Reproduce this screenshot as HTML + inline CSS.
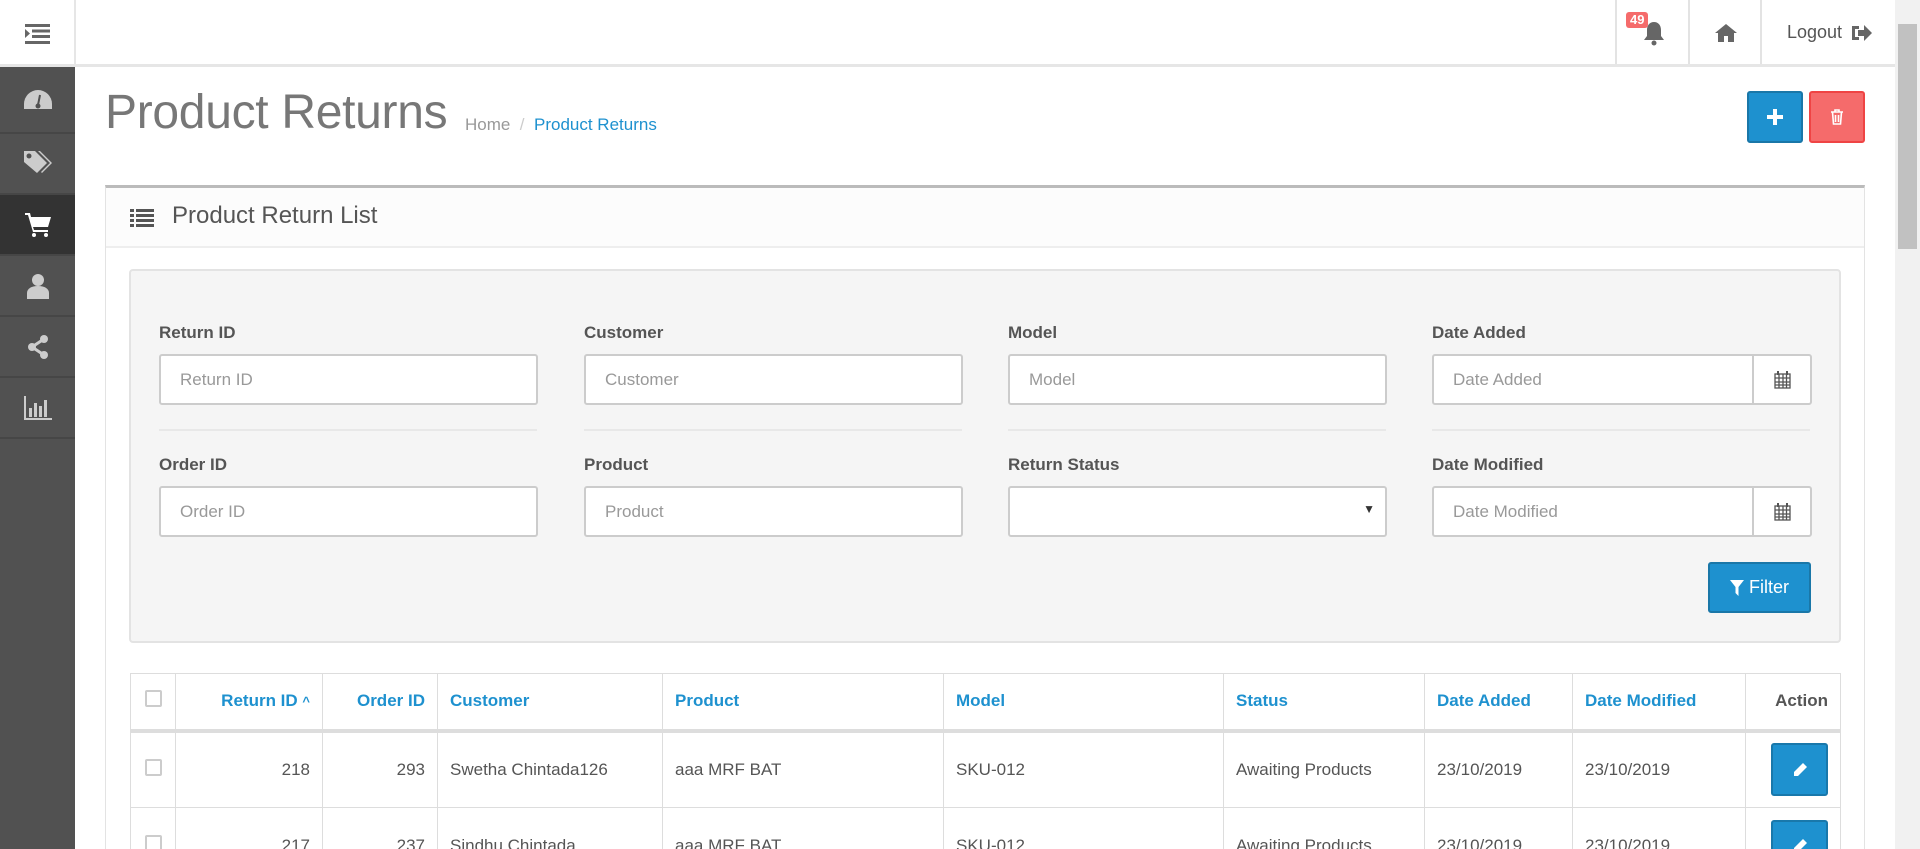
<!DOCTYPE html>
<html><head><meta charset="utf-8"><style>
*{box-sizing:border-box;margin:0;padding:0}
html,body{width:1920px;height:849px;overflow:hidden}
body{background:#fff;font-family:"Liberation Sans",sans-serif;color:#555;position:relative}
.hdr{position:absolute;left:0;top:0;width:1895px;height:67px;border-bottom:3px solid #e6e6e6;background:#fff}
.hdr .tog{position:absolute;left:0;top:0;width:76px;height:64px;border-right:2px solid #e6e6e6}
.hdr .cell{position:absolute;top:0;height:64px;border-left:2px solid #e3e3e3}
.side{position:absolute;left:0;top:67px;width:75px;height:782px;background:#515151}
.side div{height:61px;border-bottom:2px solid #464646;display:flex;align-items:center;justify-content:center}
.side div.act{background:#333}
.scroll{position:absolute;left:1895px;top:0;width:25px;height:849px;background:#f1f1f1}
.scroll .th{position:absolute;left:3px;top:24px;width:19px;height:225px;background:#c1c1c1}
h1{position:absolute;left:105px;top:85px;font-size:48px;font-weight:normal;color:#777;letter-spacing:-0.3px}
.bc{position:absolute;left:465px;top:115px;font-size:17px;color:#999}
.bc a{color:#1e91cf;text-decoration:none}
.btn{position:absolute;border-radius:3px;display:flex;align-items:center;justify-content:center}
.panel{position:absolute;left:105px;top:185px;width:1760px;height:700px;border:1px solid #e3e3e3;border-top:3px solid #bbb}
.ph{height:60px;background:#fcfcfc;border-bottom:2px solid #eee;position:relative}
.ph span{position:absolute;left:66px;top:14px;font-size:24px;color:#555}
.well{position:absolute;left:129px;top:269px;width:1712px;height:374px;background:#f5f5f5;border:2px solid #e3e3e3;border-radius:4px}
.lbl{position:absolute;font-size:17px;font-weight:bold;color:#555}
.inp{position:absolute;height:51px;background:#fff;border:2px solid #ccc;border-radius:3px;font-size:17px;color:#999;padding:14px 0 0 19px}
.hr{position:absolute;height:2px;background:#e8e8e8;width:378px}
.cal{position:absolute;width:59px;height:51px;background:#fff;border:2px solid #ccc;border-left:1px solid #ccc;border-radius:0 3px 3px 0;display:flex;align-items:center;justify-content:center}
table{position:absolute;left:130px;top:673px;border-collapse:collapse;font-size:17px;width:1711px}
td,th{border:1px solid #ddd;padding:0 12px}
th{height:57px;color:#1e91cf;text-align:left;font-weight:bold;border-bottom:4px solid #ddd}
td{height:77px;color:#555}
.r{text-align:right}
.cb{display:inline-block;width:17px;height:17px;border:2px solid #ccc;border-radius:2px;background:#fff}
.ed{display:inline-flex;width:57px;height:53px;background:#1e91cf;border:2px solid #1978ab;border-radius:3px;align-items:center;justify-content:center}
</style></head><body>
<div class="panel"><div class="ph"><svg style="position:absolute;left:24px;top:21px" width="24" height="18" viewBox="0 0 24 18" fill="#555"><rect x="0" y="0" width="4" height="3"/><rect x="6" y="0" width="18" height="3"/><rect x="0" y="5" width="4" height="3"/><rect x="6" y="5" width="18" height="3"/><rect x="0" y="10" width="4" height="3"/><rect x="6" y="10" width="18" height="3"/><rect x="0" y="15" width="4" height="3"/><rect x="6" y="15" width="18" height="3"/></svg><span>Product Return List</span></div></div>
<div class="well"></div>
<div class="lbl" style="left:159px;top:323px">Return ID</div>
<div class="lbl" style="left:584px;top:323px">Customer</div>
<div class="lbl" style="left:1008px;top:323px">Model</div>
<div class="lbl" style="left:1432px;top:323px">Date Added</div>
<div class="inp" style="left:159px;top:354px;width:379px">Return ID</div>
<div class="inp" style="left:584px;top:354px;width:379px">Customer</div>
<div class="inp" style="left:1008px;top:354px;width:379px">Model</div>
<div class="inp" style="left:1432px;top:354px;width:322px;border-radius:3px 0 0 3px">Date Added</div>
<div class="cal" style="left:1753px;top:354px"><svg width="17" height="18" viewBox="0 0 17 18" fill="none" stroke="#555" stroke-width="1.3"><rect x="1" y="3" width="15" height="14" fill="#fff"/><path d="M1 7h15M1 11h15M1 14h15M5 3v14M9 3v14M12.5 3v14"/><path d="M4 0v4M13 0v4" stroke-width="2"/></svg></div>
<div class="hr" style="left:159px;top:429px"></div><div class="hr" style="left:584px;top:429px"></div><div class="hr" style="left:1008px;top:429px"></div><div class="hr" style="left:1432px;top:429px"></div>
<div class="lbl" style="left:159px;top:455px">Order ID</div>
<div class="lbl" style="left:584px;top:455px">Product</div>
<div class="lbl" style="left:1008px;top:455px">Return Status</div>
<div class="lbl" style="left:1432px;top:455px">Date Modified</div>
<div class="inp" style="left:159px;top:486px;width:379px">Order ID</div>
<div class="inp" style="left:584px;top:486px;width:379px">Product</div>
<div class="inp" style="left:1008px;top:486px;width:379px"><span style="position:absolute;right:10px;top:14px;font-size:12px;color:#333">▼</span></div>
<div class="inp" style="left:1432px;top:486px;width:322px;border-radius:3px 0 0 3px">Date Modified</div>
<div class="cal" style="left:1753px;top:486px"><svg width="17" height="18" viewBox="0 0 17 18" fill="none" stroke="#555" stroke-width="1.3"><rect x="1" y="3" width="15" height="14" fill="#fff"/><path d="M1 7h15M1 11h15M1 14h15M5 3v14M9 3v14M12.5 3v14"/><path d="M4 0v4M13 0v4" stroke-width="2"/></svg></div>
<div class="btn" style="left:1708px;top:562px;width:103px;height:51px;background:#1e91cf;border:2px solid #1a77a8;color:#fff;font-size:18px"><svg width="14" height="16" viewBox="0 0 14 16" fill="#fff" style="margin-right:5px"><path d="M0 0h14L8.5 7v9L5.5 13V7z"/></svg>Filter</div>
<table>
<tr><th style="width:45px;text-align:center"><span class="cb"></span></th><th class="r" style="width:147px">Return ID <span style="font-size:13px">^</span></th><th class="r" style="width:115px">Order ID</th><th style="width:225px">Customer</th><th style="width:281px">Product</th><th style="width:280px">Model</th><th style="width:201px">Status</th><th style="width:148px">Date Added</th><th style="width:173px">Date Modified</th><th class="r" style="color:#555">Action</th></tr>
<tr><td style="text-align:center"><span class="cb"></span></td><td class="r">218</td><td class="r">293</td><td>Swetha Chintada126</td><td>aaa MRF BAT</td><td>SKU-012</td><td>Awaiting Products</td><td>23/10/2019</td><td>23/10/2019</td><td class="r"><span class="ed"><svg width="16" height="16" viewBox="0 0 16 16" fill="#fff"><path d="M11 1l4 4-9 9H2v-4z"/></svg></span></td></tr>
<tr><td style="text-align:center"><span class="cb"></span></td><td class="r">217</td><td class="r">237</td><td>Sindhu Chintada</td><td>aaa MRF BAT</td><td>SKU-012</td><td>Awaiting Products</td><td>23/10/2019</td><td>23/10/2019</td><td class="r"><span class="ed"><svg width="16" height="16" viewBox="0 0 16 16" fill="#fff"><path d="M11 1l4 4-9 9H2v-4z"/></svg></span></td></tr>
</table>
<div class="hdr">
 <div class="tog"><svg style="position:absolute;left:25px;top:24px" width="25" height="20" viewBox="0 0 25 20" fill="#666"><rect x="0" y="0" width="25" height="3"/><rect x="7" y="5.5" width="18" height="3"/><rect x="7" y="11" width="18" height="3"/><rect x="0" y="17" width="25" height="3"/><path d="M0 5l5 4.5-5 4.5z"/></svg></div>
 <div class="cell" style="left:1615px;width:73px"><svg style="position:absolute;left:26px;top:20px" width="22" height="26" viewBox="0 0 22 26" fill="#666"><path d="M11 2c-4 0-7 3-7 8v6l-3 4h20l-3-4v-6c0-5-3-8-7-8z"/><circle cx="11" cy="23" r="2.5"/></svg><span style="position:absolute;left:9px;top:12px;background:#f56b6b;color:#fff;font-size:13px;font-weight:bold;padding:0 4px;border-radius:3px;line-height:16px">49</span></div>
 <div class="cell" style="left:1688px;width:72px"><svg style="position:absolute;left:25px;top:24px" width="22" height="18" viewBox="0 0 22 18" fill="#666"><path d="M11 0L0 9h3v9h6v-6h4v6h6V9h3z"/></svg></div>
 <div class="cell" style="left:1760px;width:135px"><span style="position:absolute;left:25px;top:22px;font-size:18px;color:#555">Logout</span><svg style="position:absolute;left:90px;top:24px" width="20" height="18" viewBox="0 0 20 18" fill="#666"><path d="M0 2h7v3H3v8h4v3H0z"/><path d="M6 6h6V1l8 8-8 8v-5H6z"/></svg></div>
</div>
<div class="side">
 <div style="height:67px"><svg width="28" height="20" viewBox="0 0 28 20" fill="#ccc"><path d="M14 0A14 14 0 0 0 0 14v5h28v-5A14 14 0 0 0 14 0z"/><path d="M14 15l2-10" stroke="#515151" stroke-width="2"/><circle cx="14" cy="16" r="2.5" fill="#515151"/></svg></div>
 <div><svg width="28" height="26" viewBox="0 0 28 26" fill="#ccc"><path d="M0 0h11l12 12-10 10L0 11z"/><circle cx="5" cy="5" r="2.5" fill="#515151"/><path d="M14 0h2l12 12-10 10-1-1 9-9z"/></svg></div>
 <div class="act"><svg width="26" height="24" viewBox="0 0 26 24" fill="#fff"><path d="M0 0h5l1 4h20l-3 10H8l1 3h14v2H8L3 2H0z"/><circle cx="9" cy="22" r="2"/><circle cx="21" cy="22" r="2"/></svg></div>
 <div><svg width="22" height="26" viewBox="0 0 22 26" fill="#ccc"><circle cx="11" cy="7" r="6"/><path d="M0 26v-6c0-4 4-7 11-7s11 3 11 7v6z"/></svg></div>
 <div><svg width="22" height="24" viewBox="0 0 22 24" fill="#ccc"><circle cx="17" cy="4" r="4"/><circle cx="5" cy="12" r="4"/><circle cx="17" cy="20" r="4"/><path d="M5 12L17 4M5 12l12 8" stroke="#ccc" stroke-width="3"/></svg></div>
 <div><svg width="28" height="24" viewBox="0 0 28 24" fill="#ccc"><path d="M0 0h2v22h26v2H0z"/><rect x="5" y="12" width="3" height="9"/><rect x="10" y="7" width="3" height="14"/><rect x="15" y="10" width="3" height="11"/><rect x="20" y="4" width="3" height="17"/></svg></div>
</div>
<div class="scroll"><div class="th"></div></div>
<h1>Product Returns</h1>
<div class="bc">Home &nbsp;<span style="color:#ccc">/</span>&nbsp; <a>Product Returns</a></div>
<div class="btn" style="left:1747px;top:91px;width:56px;height:52px;background:#1e91cf;border:2px solid #1a77a8"><svg width="16" height="16" viewBox="0 0 16 16" fill="#fff"><rect x="6" y="0" width="4" height="16"/><rect x="0" y="6" width="16" height="4"/></svg></div>
<div class="btn" style="left:1809px;top:91px;width:56px;height:52px;background:#f56b6b;border:2px solid #ef4444"><svg width="14" height="16" viewBox="0 0 14 16" fill="none" stroke="#fff" stroke-width="1.6"><path d="M1 3h12M5 3V1h4v2M2.5 3l1 12h7l1-12M5.5 6v7M8.5 6v7"/></svg></div>
</body></html>
